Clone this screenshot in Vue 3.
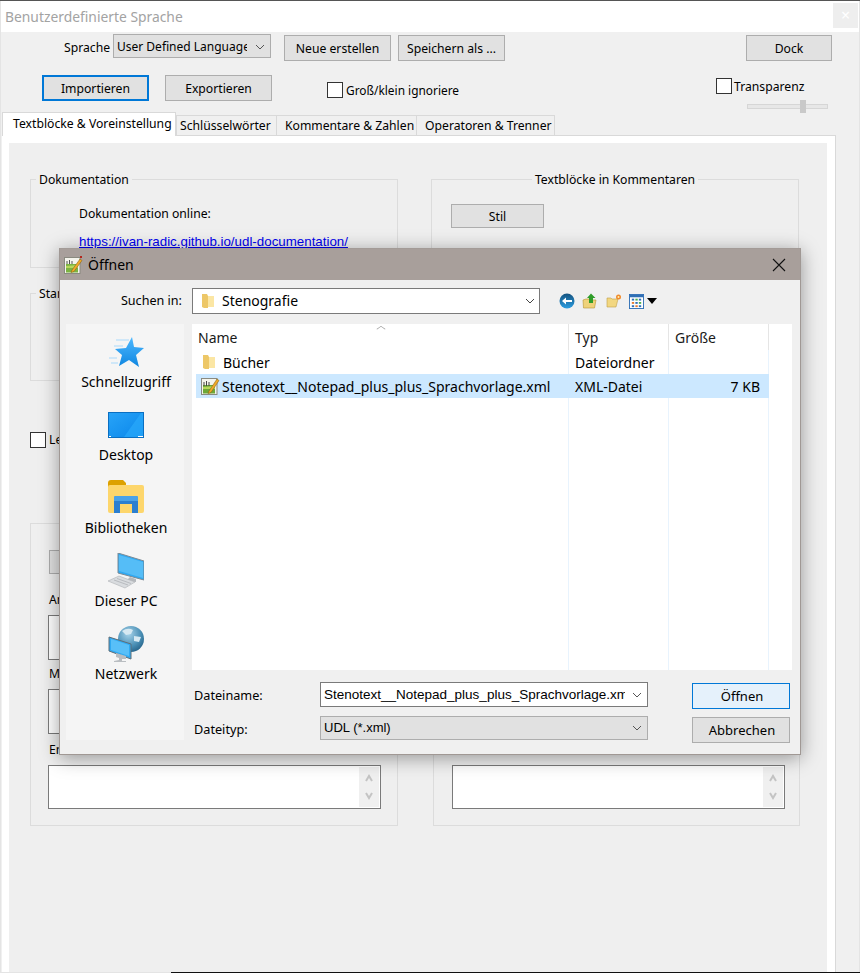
<script setup>
const tabs = [
  { label: 'Textblöcke & Voreinstellung', cls: 'tab-active' },
  { label: 'Schlüsselwörter', cls: 'tab-b' },
  { label: 'Kommentare & Zahlen', cls: 'tab-c' },
  { label: 'Operatoren & Trenner', cls: 'tab-d' }
]
</script>

<template>
  <div class="desktop">
    <div class="topline"></div>
    <div class="bottomline"></div>

    <section class="window">
      <header class="w-title">
        <span class="w-title-text">Benutzerdefinierte Sprache</span>
        <span class="w-close">×</span>
      </header>
      <div class="w-body">
        <div class="row-one">
          <span class="lang-label">Sprache</span>
          <div class="select lang-select"><span class="lang-value">User Defined Language</span><svg class="chev" viewBox="0 0 10 6"><path d="M1 1l4 4 4-4" fill="none" stroke="#555" stroke-width="1"/></svg></div>
          <button class="btn btn-new">Neue erstellen</button>
          <button class="btn btn-save">Speichern als ...</button>
          <button class="btn btn-dock">Dock</button>
        </div>
        <div class="row-two">
          <button class="btn btn-import">Importieren</button>
          <button class="btn btn-export">Exportieren</button>
          <span class="check check-case"></span>
          <span class="case-label">Groß/klein ignoriere</span>
          <div class="transparency">
            <div class="trans-line"><span class="check"></span><span class="trans-label">Transparenz</span></div>
            <div class="slider"><span class="thumb"></span></div>
          </div>
        </div>
        <nav class="tabs">
          <span v-for="t in tabs" :key="t.label" class="tab" :class="t.cls">{{ t.label }}</span>
        </nav>
        <div class="page">
          <div class="page-inner">
            <div class="columns">
              <div class="col">
                <fieldset class="group group-doc">
                  <legend>Dokumentation</legend>
                  <p class="doc-text">Dokumentation online:</p>
                  <a class="doc-link">https://ivan-radic.github.io/udl-documentation/</a>
                </fieldset>
                <fieldset class="group group-std">
                  <legend>Standard</legend>
                </fieldset>
                <div class="leer"><span class="check"></span><span class="leer-label">Leer</span></div>
                <div class="group group-delims">
                  <button class="btn btn-style-left">Stil</button>
                  <div class="field-label first">Anfang</div>
                  <div class="textbox box-a"></div>
                  <div class="field-label second">Mitte</div>
                  <div class="textbox box-a"></div>
                  <div class="field-label third">Ende</div>
                  <div class="textbox box-b">
                    <div class="scroll">
                      <svg class="sc" viewBox="0 0 8 8"><path d="M1 7l3-5 3 5" fill="none" stroke="#c4c4c4" stroke-width="2"/></svg>
                      <svg class="sc" viewBox="0 0 8 8"><path d="M1 1l3 5 3-5" fill="none" stroke="#c4c4c4" stroke-width="2"/></svg>
                    </div>
                  </div>
                </div>
              </div>
              <div class="col col-right">
                <fieldset class="group group-comment">
                  <legend class="legend-center">Textblöcke in Kommentaren</legend>
                  <button class="btn btn-style">Stil</button>
                </fieldset>
                <div class="group group-right">
                  <div class="textbox box-b box-right">
                    <div class="scroll">
                      <svg class="sc" viewBox="0 0 8 8"><path d="M1 7l3-5 3 5" fill="none" stroke="#c4c4c4" stroke-width="2"/></svg>
                      <svg class="sc" viewBox="0 0 8 8"><path d="M1 1l3 5 3-5" fill="none" stroke="#c4c4c4" stroke-width="2"/></svg>
                    </div>
                  </div>
                </div>
              </div>
            </div>
          </div>
        </div>
      </div>
    </section>

    <section class="dialog">
      <header class="d-title">
        <svg class="d-title-icon" viewBox="0 0 20 20">
          <rect x="1.500" y="2.500" width="15.500" height="16" fill="#f4f4ec" stroke="#8a8a80"/>
          <rect x="3" y="9" width="12" height="8.500" fill="#7cb342"/>
          <path d="M3 11l12-1v3H3z" fill="#b6d75a"/>
          <path d="M4 9V6M6.500 9V5M9 9V6" stroke="#555" stroke-width="1"/>
          <path d="M9 15L17 4l2 1.500-8 11-3 1z" fill="#f0a928" stroke="#7a5a10" stroke-width=".5"/>
          <rect x="17" y="1" width="2" height="2" fill="#b3261e"/>
        </svg>
        <span class="d-title-text">Öffnen</span>
        <svg class="d-close" viewBox="0 0 14 14"><path d="M1 1l12 12M13 1L1 13" stroke="#111" stroke-width="1.100" fill="none"/></svg>
      </header>
      <div class="d-body">
        <div class="d-top">
          <span class="look-label">Suchen in:</span>
          <div class="combo look-combo">
            <svg class="folder-small" viewBox="0 0 16 16"><path d="M2 1h5l1 2v12H4l-2-1z" fill="#edc767"/><path d="M8 3h6v11H8z" fill="#fbe6a4"/></svg>
            <span>Stenografie</span>
            <svg class="chev chev-d" viewBox="0 0 10 6"><path d="M1 1l4 4 4-4" fill="none" stroke="#444"/></svg>
          </div>
          <div class="d-tools">
            <svg class="tool" viewBox="0 0 16 16">
              <defs><linearGradient id="gb" x1="0" y1="0" x2="0" y2="1"><stop offset="0" stop-color="#14527f"/><stop offset="1" stop-color="#2c9de0"/></linearGradient></defs>
              <circle cx="8" cy="8" r="7.500" fill="url(#gb)"/>
              <path d="M3 8l4-3.500V7h6v2H7v2.500z" fill="#fff"/>
            </svg>
            <svg class="tool tool-up" viewBox="0 0 16 16">
              <path d="M1 7l3-1h3l1 1h6l-1.500 8H1.500z" fill="#efd27a" stroke="#b59433" stroke-width=".6"/>
              <path d="M7 10V5H5l4-4.500L13.500 5H11v5z" fill="#2f9d2a"/>
            </svg>
            <svg class="tool" viewBox="0 0 16 16">
              <path d="M1 5l4 0 1 1h6l-2 8H1z" fill="#f2d781" stroke="#bfa048" stroke-width=".6"/>
              <circle cx="12.500" cy="4" r="2.500" fill="#f08a2c"/>
              <circle cx="12.500" cy="4" r="1" fill="#fff2b0"/>
            </svg>
            <span class="view-btn">
              <svg class="view-grid" viewBox="0 0 16 16">
                <rect x=".5" y=".5" width="15" height="15" fill="#fff" stroke="#2f6fb5"/>
                <rect x="1" y="1" width="14" height="2.500" fill="#2f6fb5"/>
                <path d="M3 5h2.500v2H3z" fill="#2f6fb5"/><path d="M6.800 5h2.500v2H6.800z" fill="#4caf50"/><path d="M10.500 5H13v2h-2.500z" fill="#2f6fb5"/>
                <path d="M3 8.500h2.500v2H3z" fill="#e57a2e"/><path d="M6.800 8.500h2.500v2H6.800z" fill="#2f6fb5"/><path d="M10.500 8.500H13v2h-2.500z" fill="#4caf50"/>
                <path d="M3 12h2.500v2H3z" fill="#2f6fb5"/><path d="M6.800 12h2.500v2H6.800z" fill="#e57a2e"/><path d="M10.500 12H13v2h-2.500z" fill="#2f6fb5"/>
              </svg>
              <svg class="view-arrow" viewBox="0 0 10 6"><path d="M0 0h10L5 6z" fill="#000"/></svg>
            </span>
          </div>
        </div>

        <div class="d-main">
          <aside class="places">
            <div class="place">
              <svg class="place-icon" viewBox="0 0 36 36">
                <defs><linearGradient id="gs" x1="0" y1="0" x2="0" y2="1"><stop offset="0" stop-color="#4db8ff"/><stop offset="1" stop-color="#0f86e0"/></linearGradient></defs>
                <path d="M24 3l2 10 10 1-8 7 3 12-10-7-10 6 3-11-7-6 11-1z" fill="url(#gs)"/>
                <path d="M8 6h13M6 12h9M1 24h8M3 29h7" stroke="#a9d9fb" stroke-width="1.200"/>
              </svg>
              <span>Schnellzugriff</span>
            </div>
            <div class="place">
              <svg class="place-icon" viewBox="0 0 36 36">
                <defs><linearGradient id="gd" x1="0" y1="0" x2="1" y2="1"><stop offset="0" stop-color="#28a4f8"/><stop offset="1" stop-color="#0a86ea"/></linearGradient></defs>
                <rect x=".5" y="5.500" width="35" height="25" fill="url(#gd)" stroke="#0a6fc2"/>
                <path d="M16 30L33 6h2v24z" fill="#2aa9fb" opacity=".7"/>
                <path d="M1 29.500h2M30 29.500h5" stroke="#fff"/>
              </svg>
              <span>Desktop</span>
            </div>
            <div class="place">
              <svg class="place-icon" viewBox="0 0 36 36">
                <g transform="translate(0 -2)">
                  <path d="M0 5q0-3 3-3h12l3 3v4H0z" fill="#dda100"/>
                  <path d="M0 9q0-2 2-2h32q2 0 2 2v24q0 2-2 2H2q-2 0-2-2z" fill="#fdd66c"/>
                  <path d="M6 35V20q0-2 2-2h20q2 0 2 2v15h-6v-9H12v9z" fill="#2b7fd0"/>
                  <path d="M6 19q0-1 2-1h20q2 0 2 1v4H6z" fill="#4aa2e8"/>
                </g>
              </svg>
              <span>Bibliotheken</span>
            </div>
            <div class="place">
              <svg class="place-icon" viewBox="0 0 36 36">
                <path d="M10 0l26 8v19L10 20z" fill="#2fa9f2" stroke="#7d8a94"/>
                <path d="M11 2l24 7v16L11 18z" fill="#55bdf7"/>
                <path d="M22 24l6 2v3l-10-1z" fill="#b4b8bc"/>
                <path d="M0 28l11-5 16 6-10 6z" fill="#d9dcdf" stroke="#aeb2b6" stroke-width=".6"/>
                <path d="M6 27l14 5M9 25.500l14 5" stroke="#aeb2b6" stroke-width=".8"/>
              </svg>
              <span>Dieser PC</span>
            </div>
            <div class="place">
              <svg class="place-icon" viewBox="0 0 36 36">
                <defs><radialGradient id="gg" cx=".4" cy=".3" r=".8"><stop offset="0" stop-color="#a8d4ea"/><stop offset=".6" stop-color="#4a8fb5"/><stop offset="1" stop-color="#1f5a80"/></radialGradient></defs>
                <circle cx="23" cy="13" r="13" fill="url(#gg)"/>
                <path d="M14 5q6-4 11-1l-2 4-5 1zM26 10l7 1-2 5-5-1z" fill="#d6e9f2"/>
                <path d="M1 11l22 7v15L1 25z" fill="#2fa9f2" stroke="#5f6e78"/>
                <path d="M3 13l18 6v11L3 24z" fill="#58bff8"/>
                <path d="M8 27l10 3v3l-4 0v2h4v1H6v-1l5-1v-2l-3-1z" fill="#b9bdc1"/>
              </svg>
              <span>Netzwerk</span>
            </div>
          </aside>

          <div class="list">
            <span class="sort-caret"></span>
            <div class="list-sep sep-a"></div>
            <div class="list-sep sep-b"></div>
            <div class="list-sep sep-c"></div>
            <div class="list-head">
              <span class="c-name">Name</span>
              <span class="c-type">Typ</span>
              <span class="c-size">Größe</span>
            </div>
            <div class="list-row">
              <span class="c-name name-cell">
                <svg class="row-icon" viewBox="0 0 16 16"><path d="M2 1h5l1 2v12H4l-2-1z" fill="#edc767"/><path d="M8 3h6v11H8z" fill="#fbe6a4"/></svg>
                <span>Bücher</span>
              </span>
              <span class="c-type">Dateiordner</span>
              <span class="c-size"></span>
            </div>
            <div class="list-row selected">
              <span class="c-name name-cell">
                <svg class="row-icon" viewBox="0 0 20 20">
                  <rect x="1.500" y="2.500" width="15.500" height="16" fill="#f4f4ec" stroke="#8a8a80"/>
                  <rect x="3" y="9" width="12" height="8.500" fill="#6ea838"/>
                  <path d="M3 11l12-1v3H3z" fill="#b6d75a"/>
                  <path d="M4 10V6M6.500 10V5M9 10V6" stroke="#444" stroke-width="1"/>
                  <path d="M9 15L17 3l2 1.500-8 12-3 1z" fill="#f0a928" stroke="#7a5a10" stroke-width=".5"/>
                </svg>
                <span>Stenotext__Notepad_plus_plus_Sprachvorlage.xml</span>
              </span>
              <span class="c-type">XML-Datei</span>
              <span class="c-size">7 KB</span>
            </div>
          </div>
        </div>

        <div class="d-bottom">
          <div class="d-fields">
            <div class="field-row">
              <span class="d-label">Dateiname:</span>
              <div class="combo name-combo"><span class="clip">Stenotext__Notepad_plus_plus_Sprachvorlage.xml</span><svg class="chev" viewBox="0 0 10 6"><path d="M1 1l4 4 4-4" fill="none" stroke="#555"/></svg></div>
            </div>
            <div class="field-row">
              <span class="d-label">Dateityp:</span>
              <div class="combo type-combo"><span class="clip">UDL (*.xml)</span><svg class="chev" viewBox="0 0 10 6"><path d="M1 1l4 4 4-4" fill="none" stroke="#555"/></svg></div>
            </div>
          </div>
          <div class="d-actions">
            <button class="d-btn d-primary">Öffnen</button>
            <button class="d-btn">Abbrechen</button>
          </div>
        </div>
      </div>
    </section>
  </div>
</template>

<style scoped>
.desktop {
  position: relative;
  width: 860px;
  height: 973px;
  overflow: hidden;
  background: #e4e4e4;
  font-family: "Noto Sans", sans-serif;
  color: #000;
}
.topline { height: 1px; background: #555; }
.bottomline { position: absolute; left: 171px; right: 0; bottom: 0; height: 1px; background: #111; }

.window {
  position: absolute;
  left: 1px;
  top: 1px;
  width: 858px;
  height: 971px;
  display: flex;
  flex-direction: column;
  background: #f0f0f0;
  font-size: 12.2px;
  line-height: 16px;
}
.w-title { position: relative; height: 31px; flex: none; background: #fff; }
.w-title-text { display: block; padding: 7px 0 0 4px; font-size: 13.850px; line-height: 17px; color: #a3a3a3; }
.w-close {
  position: absolute;
  right: 1px;
  top: 2px;
  width: 25px;
  height: 25px;
  background: #eeeeee;
  color: #fff;
  text-align: center;
  font-size: 16px;
  line-height: 24px;
}
.w-body { flex: 1; display: flex; flex-direction: column; min-height: 0; }

.btn {
  box-sizing: border-box;
  height: 26px;
  padding: 2px 0 0;
  background: #e1e1e1;
  border: 1px solid #adadad;
  font: inherit;
  color: #000;
}
.row-one { box-sizing: border-box; display: flex; align-items: flex-start; height: 29px; padding: 2px 27px 0 63px; flex: none; }
.lang-label { width: 49px; padding-top: 6px; }
.lang-select { width: 158px; height: 24px; }
.select {
  box-sizing: border-box;
  display: flex;
  align-items: center;
  justify-content: space-between;
  padding: 2px 5px 0 3px;
  background: #e1e1e1;
  border: 1px solid #adadad;
}
.lang-value { width: 130px; overflow: hidden; white-space: nowrap; font-size: 12px; }
.chev { width: 10px; height: 6px; flex: none; }
.btn-new { width: 107px; margin: 1px 0 0 13px; }
.btn-save { width: 107px; margin: 1px 0 0 7px; }
.btn-dock { width: 86px; margin: 1px 0 0 auto; }

.row-two { box-sizing: border-box; display: flex; align-items: flex-start; height: 50px; padding: 14px 0 0 41px; flex: none; }
.btn-import { width: 107px; border: 2px solid #0078d7; }
.btn-export { width: 107px; margin-left: 16px; }
.check {
  box-sizing: border-box;
  display: block;
  flex: none;
  width: 16px;
  height: 16px;
  background: #fff;
  border: 1px solid #333;
}
.check-case { margin: 7px 0 0 55px; }
.case-label { margin: 7px 0 0 3px; font-size: 11.900px; }
.transparency { margin-left: auto; margin-right: 31px; width: 112px; margin-top: 3px; }
.trans-line { display: flex; gap: 3px; align-items: flex-start; }
.trans-label { padding-top: 1px; margin-left: -1px; }
.slider { position: relative; height: 5px; margin: 9px 0 0 31px; width: 81px; background: #e7e7e7; border: 1px solid #d6d6d6; box-sizing: border-box; }
.thumb { position: absolute; left: 52px; top: -5px; width: 6px; height: 13px; background: #c9c9c9; }

.tabs { display: flex; align-items: flex-end; height: 24px; padding-left: 1px; flex: none; }
.tab {
  box-sizing: border-box;
  height: 20px;
  background: #f0f0f0;
  border: 1px solid #d9d9d9;
  border-bottom: 0;
  line-height: 20px;
  white-space: nowrap;
}
.tab-active { position: relative; z-index: 1; width: 174px; height: 24px; margin: 0 0 -1px 0; padding: 1px 0 0 10px; background: #fff; border-color: #d9d9d9; }
.tab-b { width: 101px; padding-left: 3px; }
.tab-c { width: 140px; border-left: 0; padding-left: 8px; }
.tab-d { width: 138px; border-left: 0; padding-left: 8px; }

.page { flex: 1; min-height: 0; margin: 0 23px 0 1px; box-sizing: border-box; background: #fff; border-top: 1px solid #d9d9d9; border-right: 1px solid #d9d9d9; padding: 7px 8px 0 7px; display: flex; }
.page-inner { flex: 1; background: #efefef; padding: 36px 0 0 21px; }
.columns { display: flex; }
.col { width: 368px; }
.col-right { margin-left: 33px; }

.group { box-sizing: border-box; position: relative; margin: 0; padding: 0; border: 1px solid #dcdcdc; }
fieldset.group { padding: 0; }
legend { margin-left: 5px; padding: 2px 3px 0; font-size: 12.2px; line-height: 14px; }
.legend-center { margin: 0 auto; }
.group-doc { height: 97px; margin-top: -8px; }
.doc-text { margin: 19px 0 0 48px; }
.doc-link { display: block; margin: 12px 0 0 48px; color: #0000ee; text-decoration: underline; font-family: "Liberation Sans", sans-serif; font-size: 13.330px; white-space: nowrap; }
.group-std { height: 96px; margin-top: 17px; }
.leer { display: flex; align-items: center; gap: 3px; margin-top: 51px; }
.group-delims { height: 303px; margin-top: 75px; padding: 26px 16px 0 17px; }
.group-comment { height: 345px; margin-top: -8px; }
.btn-style { display: block; width: 93px; height: 24px; margin: 17px 0 0 19px; }
.btn-style-left { display: block; width: 93px; height: 24px; margin-left: 1px; }
.field-label { margin-left: 1px; }
.first { margin-top: 18px; }
.second { margin-top: 6px; }
.third { margin-top: 8px; }
.textbox { position: relative; box-sizing: border-box; background: #fff; border: 1px solid #7a7a7a; }
.box-a { height: 45px; margin-top: 7px; }
.box-b { height: 44px; margin-top: 7px; }
.scroll {
  position: absolute;
  right: 1px;
  top: 1px;
  bottom: 1px;
  width: 20px;
  box-sizing: border-box;
  padding: 7px 0;
  display: flex;
  flex-direction: column;
  align-items: center;
  justify-content: space-between;
  background: #f0f0f0;
}
.sc { width: 8px; height: 8px; }
.group-right { height: 303px; margin: 7px -1px 0 2px; padding: 241px 14px 0 18px; }
.box-right { margin-top: 0; }

.dialog {
  position: absolute;
  left: 59px;
  top: 248px;
  width: 742px;
  height: 507px;
  box-sizing: border-box;
  display: flex;
  flex-direction: column;
  background: #f0f0f0;
  border: 1px solid #a09894;
  border-top: 1px solid #a39b97;
  box-shadow: 0 3px 18px rgba(0, 0, 0, .38);
  font-size: 14px;
  line-height: 18px;
}
.d-title { display: flex; align-items: center; height: 31px; flex: none; background: #a89f9b; padding: 0 14px 0 3px; }
.d-title-icon { width: 20px; height: 20px; }
.d-title-text { margin-left: 5px; font-size: 14px; }
.d-close { margin-left: auto; width: 14px; height: 14px; }
.d-body { flex: 1; display: flex; flex-direction: column; min-height: 0; }
.d-top { display: flex; align-items: center; height: 26px; margin-top: 8px; flex: none; }
.look-label { width: 122px; margin-right: 10px; text-align: right; font-size: 12.600px; }
.combo {
  box-sizing: border-box;
  display: flex;
  align-items: center;
  background: #fff;
  border: 1px solid #7a7a7a;
}
.look-combo { width: 348px; height: 26px; padding: 0 4px 0 7px; }
.folder-small { width: 16px; height: 16px; margin-right: 6px; }
.chev-d { margin-left: auto; }
.d-tools { display: flex; align-items: center; gap: 7px; margin-left: 19px; }
.tool { width: 16px; height: 16px; }
.tool-up { margin-right: 1px; }
.view-btn { display: flex; align-items: center; gap: 3px; }
.view-grid { width: 15px; height: 15px; }
.view-arrow { width: 10px; height: 6px; }

.d-main { display: flex; height: 346px; margin-top: 10px; padding-left: 6px; flex: none; }
.places {
  width: 118px;
  height: 416px;
  margin-right: 8px;
  background: #f5f5f5;
  display: flex;
  flex-direction: column;
  align-items: center;
  flex: none;
  padding: 10px 0 0 2px;
  box-sizing: border-box;
}
.place { display: flex; flex-direction: column; align-items: center; height: 73px; }
.place-icon { width: 36px; height: 36px; margin-bottom: 3px; }
.list { position: relative; width: 600px; background: #fff; }
.list-sep { position: absolute; top: 0; bottom: 0; width: 1px; background: #e8f3fd; }
.list-sep::before { content: ""; position: absolute; left: 0; top: 0; width: 1px; height: 26px; background: #e5e5e5; }
.sep-a { left: 376px; }
.sep-b { left: 476px; }
.sep-c { left: 576px; }
.sort-caret { position: absolute; left: 185px; top: 1px; width: 7px; height: 7px; border-left: 1px solid #999; border-top: 1px solid #999; transform: scale(.8, .55) rotate(45deg); }
.list-head, .list-row { position: relative; display: flex; align-items: center; }
.list-head { height: 26px; padding-top: 2px; box-sizing: border-box; color: #1a1a1a; }
.list-row { box-sizing: border-box; height: 24px; width: 573px; margin-left: 4px; padding-top: 2px; }
.selected { background: #cce8ff; }
.c-name { width: 372px; padding-left: 2px; box-sizing: border-box; flex: none; }
.list-head .c-name { margin-left: 4px; }
.c-type { width: 100px; padding-left: 7px; box-sizing: border-box; flex: none; }
.c-size { width: 100px; box-sizing: border-box; flex: none; }
.list-head .c-size { padding-left: 7px; }
.list-row .c-size { text-align: right; padding-right: 8px; }
.name-cell { display: flex; align-items: center; gap: 2px; padding-left: 4px; }
.row-icon { width: 20px; height: 20px; flex: none; margin-top: -2px; }
.list-row:not(.selected) .row-icon { width: 16px; height: 16px; margin-left: 1px; margin-right: 4px; }

.d-bottom { position: relative; display: flex; height: 74px; padding: 12px 10px 0 134px; box-sizing: border-box; }
.d-fields { display: flex; flex-direction: column; gap: 9px; width: 455px; }
.field-row { display: flex; align-items: flex-start; height: 25px; }
.d-label { width: 126px; padding-top: 4px; font-size: 12.700px; }
.name-combo, .type-combo { width: 328px; height: 25px; padding: 0 5px 0 3px; justify-content: space-between; font-family: "Liberation Sans", sans-serif; font-size: 13.500px; }
.type-combo { height: 24px; background: #e1e1e1; border-color: #adadad; font-size: 13px; }
.clip { overflow: hidden; white-space: nowrap; width: 301px; }
.d-actions { display: flex; flex-direction: column; gap: 8px; margin-left: 44px; margin-top: 1px; }
.d-btn { box-sizing: border-box; width: 98px; height: 26px; padding: 0 0 0 2px; background: #e1e1e1; border: 1px solid #adadad; font-family: inherit; font-size: 13px; color: #000; }
.d-primary { background: #e5f1fb; border-color: #0078d7; }
</style>

<style>
html, body { margin: 0; padding: 0; }
</style>
